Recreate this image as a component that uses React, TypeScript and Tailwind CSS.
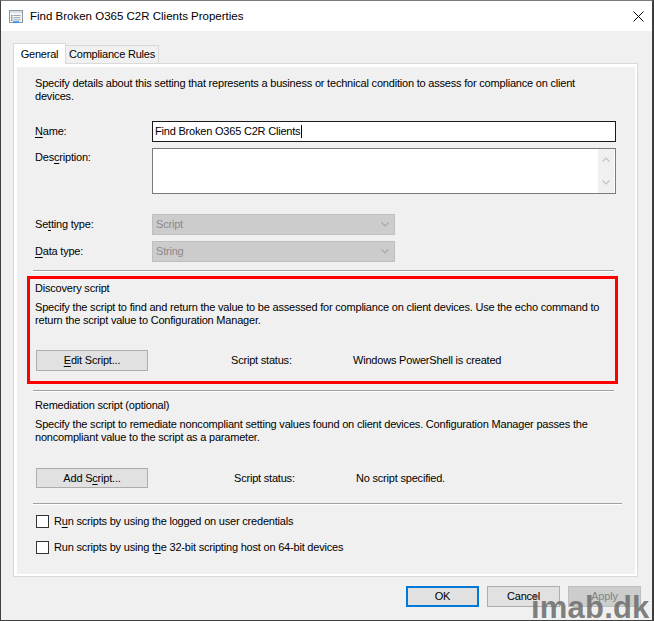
import React from "react";

const U = ({ children }: { children: React.ReactNode }) => (
  <span className="underline underline-offset-[2px] decoration-[1px]">{children}</span>
);

const Chevron = ({ up = false, color = "#a8a8a8" }: { up?: boolean; color?: string }) => (
  <svg width="8" height="5" viewBox="0 0 8 5" className="shrink-0">
    <polyline
      points={up ? "0.5,4.5 4,1 7.5,4.5" : "0.5,0.5 4,4 7.5,0.5"}
      fill="none"
      stroke={color}
      strokeWidth="1.2"
    />
  </svg>
);

const Separator = ({ w }: { w: string }) => (
  <div className={`ml-[-2px] h-[2px] border-t border-t-[#a0a0a0] border-b border-b-white ${w}`} />
);

export default function App() {
  return (
    <div className="relative w-[654px] h-[621px] bg-[#3a3a3a] overflow-hidden text-black font-['Liberation_Sans',Arial,sans-serif] text-[11px] leading-[13px] tracking-[-0.2px]">
      <div className="flex flex-col w-[653px] h-[621px] border border-[#404040] border-t-[#7a7a7a] bg-[#f0f0f0]">
        {/* Title bar */}
        <div className="flex items-center justify-between h-[30px] shrink-0 bg-white pl-[7px] pr-[8px]">
          <div className="flex items-center gap-[6px]">
            <svg width="16" height="16" viewBox="0 0 16 16" className="shrink-0">
              <rect x="1.5" y="2.5" width="13" height="12" fill="#f3f5f7" stroke="#8d96a1" />
              <rect x="2" y="3" width="12" height="2" fill="#d8dee5" />
              <rect x="3" y="7" width="1.5" height="1.5" fill="#7f8a96" />
              <rect x="5.5" y="7" width="7" height="1" fill="#9aa4ae" />
              <rect x="3" y="9.2" width="1.5" height="1.5" fill="#7f8a96" />
              <rect x="5.5" y="9.2" width="7" height="1" fill="#9aa4ae" />
              <rect x="3" y="11.4" width="1.5" height="1.5" fill="#7f8a96" />
              <rect x="5.5" y="11.4" width="7" height="1" fill="#9aa4ae" />
              <rect x="5" y="13.3" width="6" height="1.6" fill="#1e90ff" />
            </svg>
            <span className="text-[11.5px] tracking-normal">Find Broken O365 C2R Clients Properties</span>
          </div>
          <svg width="11" height="11" viewBox="0 0 11 11">
            <line x1="0.5" y1="0.5" x2="10.5" y2="10.5" stroke="#000" strokeWidth="1" />
            <line x1="10.5" y1="0.5" x2="0.5" y2="10.5" stroke="#000" strokeWidth="1" />
          </svg>
        </div>

        {/* Body */}
        <div className="flex flex-col pl-[12px] pt-[12px]">
          {/* Tabs */}
          <div className="flex items-end h-[20px]">
            <div className="relative z-10 w-[53px] h-[21px] mb-[-1px] bg-white border border-b-0 border-[#d9d9d9] flex items-center justify-center">
              General
            </div>
            <div className="w-[94px] h-[18px] ml-[-1px] border border-b-0 border-[#d9d9d9] flex items-center justify-center">
              Compliance Rules
            </div>
          </div>

          {/* Panel */}
          <div className="w-[625px] h-[514px] border border-[#d9d9d9] bg-white pt-[3px] pl-[3px] pr-[2px] pb-[2px]">
            <div className="relative h-full bg-[#f0f0f0] pl-[18px] pt-[10px] flex flex-col">
              <p className="whitespace-nowrap">
                Specify details about this setting that represents a business or technical condition to assess for compliance on client
                <br />
                devices.
              </p>

              {/* Name */}
              <div className="flex items-center mt-[18px] h-[21px]">
                <span className="w-[117px] shrink-0">
                  <U>N</U>ame:
                </span>
                <div className="w-[464px] h-[21px] border border-[#1a1a1a] bg-white flex items-center pl-[2px]">
                  <span className="whitespace-nowrap">Find Broken O365 C2R Clients</span>
                  <span className="inline-block w-px h-[13px] bg-black ml-[1px]" />
                </div>
              </div>

              {/* Description */}
              <div className="flex items-start mt-[6px]">
                <span className="w-[117px] shrink-0 pt-[3px]">
                  Des<U>c</U>ription:
                </span>
                <div className="w-[464px] h-[46px] border border-[#7a7a7a] bg-white flex justify-end pr-px">
                  <div className="w-[16px] h-full bg-[#f0f0f0] flex flex-col items-center justify-between py-[8px]">
                    <Chevron up color="#c2c2c2" />
                    <Chevron color="#c2c2c2" />
                  </div>
                </div>
              </div>

              {/* Setting type */}
              <div className="flex items-center mt-[20px] h-[21px]">
                <span className="w-[117px] shrink-0">
                  Se<U>t</U>ting type:
                </span>
                <div className="w-[243px] h-[21px] border border-[#bfbfbf] bg-[#cccccc] flex items-center justify-between pl-[3px] pr-[5px] text-[#8a8a8a]">
                  <span>Script</span>
                  <Chevron />
                </div>
              </div>

              {/* Data type */}
              <div className="flex items-center mt-[6px] h-[21px]">
                <span className="w-[117px] shrink-0">
                  <U>D</U>ata type:
                </span>
                <div className="w-[243px] h-[21px] border border-[#bfbfbf] bg-[#cccccc] flex items-center justify-between pl-[3px] pr-[5px] text-[#8a8a8a]">
                  <span>String</span>
                  <Chevron />
                </div>
              </div>

              <div className="mt-[8px]">
                <Separator w="w-[581px]" />
              </div>

              {/* Discovery script */}
              <p className="mt-[10px]">Discovery script</p>
              <p className="mt-[6px] whitespace-nowrap">
                Specify the script to find and return the value to be assessed for compliance on client devices. Use the echo command to
                <br />
                return the script value to Configuration Manager.
              </p>
              <div className="flex items-center mt-[23px] h-[21px]">
                <button className="ml-[1px] w-[112px] h-[21px] border border-[#adadad] bg-[#e1e1e1] flex items-center justify-center">
                  <span>
                    <U>E</U>dit Script...
                  </span>
                </button>
                <span className="ml-[83px] w-[122px] shrink-0">Script status:</span>
                <span className="whitespace-nowrap">Windows PowerShell is created</span>
              </div>

              <div className="mt-[19px]">
                <Separator w="w-[581px]" />
              </div>

              {/* Remediation script */}
              <p className="mt-[7px]">Remediation script (optional)</p>
              <p className="mt-[6px] whitespace-nowrap">
                Specify the script to remediate noncompliant setting values found on client devices. Configuration Manager passes the
                <br />
                noncompliant value to the script as a parameter.
              </p>
              <div className="flex items-center mt-[24px] h-[20px]">
                <button className="ml-[1px] w-[112px] h-[20px] border border-[#adadad] bg-[#e1e1e1] flex items-center justify-center">
                  <span>
                    Add S<U>c</U>ript...
                  </span>
                </button>
                <span className="ml-[86px] w-[122px] shrink-0">Script status:</span>
                <span className="whitespace-nowrap">No script specified.</span>
              </div>

              <div className="mt-[15px]">
                <Separator w="w-[589px]" />
              </div>

              {/* Checkboxes */}
              <div className="flex items-center mt-[10px] h-[13px]">
                <div className="ml-[1px] w-[13px] h-[13px] border border-[#333333] bg-white shrink-0" />
                <span className="ml-[5px] whitespace-nowrap">
                  R<U>u</U>n scripts by using the logged on user credentials
                </span>
              </div>
              <div className="flex items-center mt-[13px] h-[13px]">
                <div className="ml-[1px] w-[13px] h-[13px] border border-[#333333] bg-white shrink-0" />
                <span className="ml-[5px] whitespace-nowrap">
                  Run scripts by using t<U>h</U>e 32-bit scripting host on 64-bit devices
                </span>
              </div>

              {/* Red annotation box */}
              <div className="absolute left-[10px] top-[209px] w-[591px] h-[108px] border-[3px] border-[#ff0000] pointer-events-none" />
            </div>
          </div>

          {/* Dialog buttons */}
          <div className="flex justify-end gap-[8px] mt-[9px] pr-[11px]">
            <button className="w-[73px] h-[21px] border-2 border-[#0078d7] bg-[#e1e1e1] flex items-center justify-center">
              OK
            </button>
            <button className="w-[73px] h-[21px] border border-[#adadad] bg-[#e1e1e1] flex items-center justify-center">
              Cancel
            </button>
            <button className="w-[73px] h-[21px] border border-[#bfbfbf] bg-[#cccccc] text-[#838383] flex items-center justify-center">
              Apply
            </button>
          </div>
        </div>
      </div>

      {/* Watermark */}
      <div className="absolute left-[531px] top-[592px] text-[31px] leading-[31px] font-bold tracking-[0.2px] text-[#6b6b6b]/85 whitespace-nowrap pointer-events-none">
        imab.dk
      </div>
    </div>
  );
}
